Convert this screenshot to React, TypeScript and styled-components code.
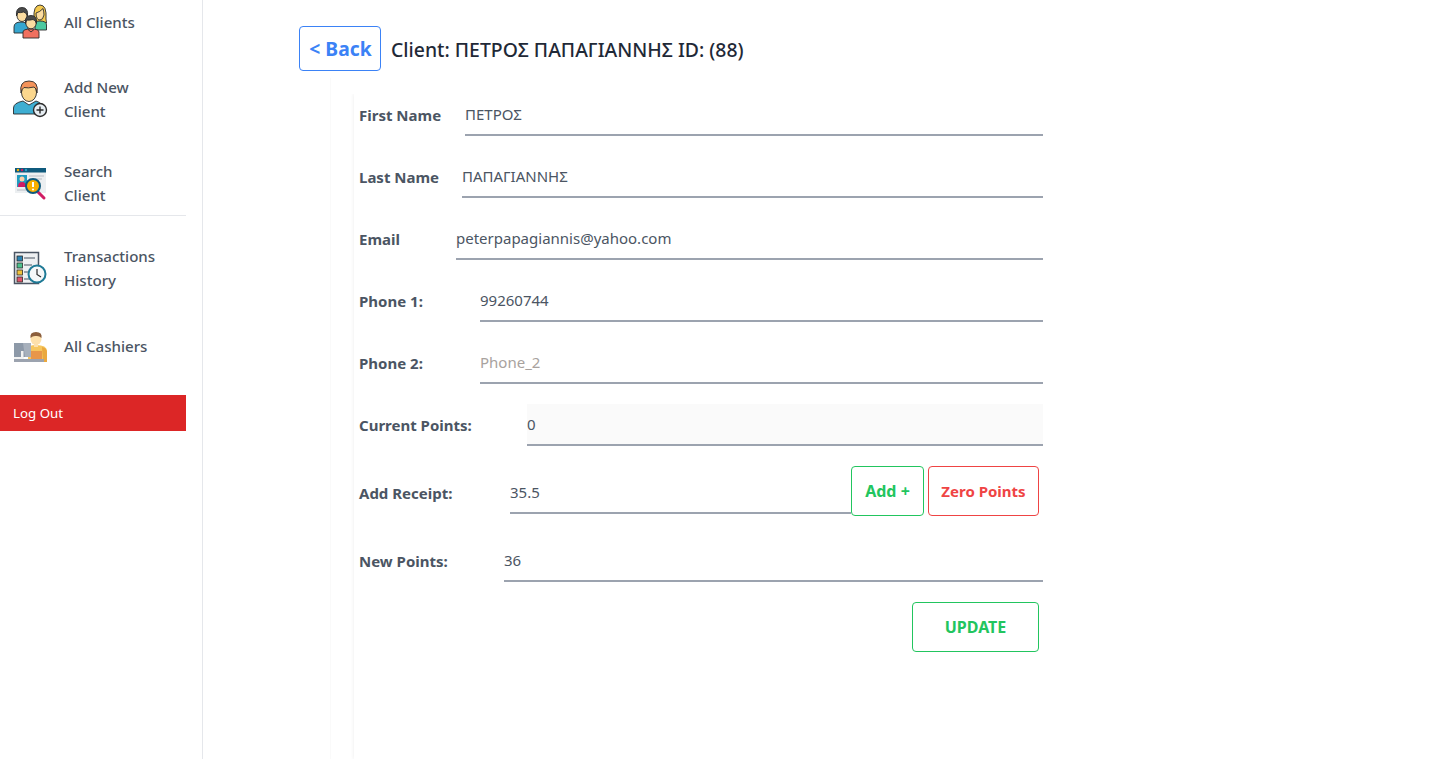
import styled, { createGlobalStyle } from "styled-components";

const GlobalStyle = createGlobalStyle`
  html, body {
    margin: 0;
    padding: 0;
    height: 100%;
    background: #ffffff;
    overflow: hidden;
    font-family: "Noto Sans", "Open Sans", sans-serif;
  }
  * { box-sizing: border-box; }
`;

const Page = styled.div`
  display: flex;
  height: 100vh;
`;

const Sidebar = styled.aside`
  width: 203px;
  flex-shrink: 0;
  border-right: 1px solid #e5e7eb;
  padding-top: 1px;
`;

const Nav = styled.nav`
  width: 186px;
  display: flex;
  flex-direction: column;
`;

const NavItem = styled.a<{ $top?: number }>`
  display: flex;
  align-items: center;
  margin-top: ${({ $top }) => $top ?? 0}px;
  padding-left: 8px;
  gap: 12px;
  color: #4b5563;
  font-size: 15.1px;
  font-weight: 500;
  line-height: 24px;
  svg { flex-shrink: 0; }
`;

const Divider = styled.hr`
  margin: 8px 0 0;
  border: 0;
  border-top: 1px solid #e5e7eb;
`;

const LogOut = styled.button`
  margin-top: 28px;
  height: 36px;
  padding: 0 0 0 13px;
  border: 0;
  background: #dc2626;
  color: #ffffff;
  font: 400 13.3px "Noto Sans", sans-serif;
  text-align: left;
`;

const Main = styled.main`
  flex: 1;
  display: flex;
  flex-direction: column;
  padding: 26px 0 0 96px;
`;

const Header = styled.header`
  display: flex;
  align-items: center;
  gap: 10px;
`;

const BackButton = styled.button`
  width: 82px;
  height: 45px;
  padding: 0 0 0 1px;
  background: #ffffff;
  border: 1px solid #3b82f6;
  border-radius: 4px;
  color: #3b82f6;
  font: 700 19.3px "Noto Sans", sans-serif;
`;

const Title = styled.h1`
  margin: 2px 0 0;
  color: #1f2937;
  font-size: 19.4px;
  font-weight: 500;
`;

const Panel = styled.section`
  flex: 1;
  margin: 7px 0 0 31px;
  padding: 16px 0 0 23px;
  display: flex;
  border-left: 1px solid #fafafa;
`;

const Form = styled.form`
  width: 689px;
  padding-left: 5px;
  box-shadow: -1px 0 3px rgba(0, 0, 0, 0.05);
  clip-path: inset(0 0 0 -6px);
`;

const Row = styled.div<{ $nudge?: number; $after?: number }>`
  display: flex;
  align-items: center;
  margin-bottom: ${({ $after }) => $after ?? 20}px;

  label, input {
    margin-top: ${({ $nudge }) => $nudge ?? 0}px;
  }
`;

const Label = styled.label<{ $width: number }>`
  width: ${({ $width }) => $width}px;
  flex-shrink: 0;
  color: #4b5563;
  font-size: 15px;
  font-weight: 700;
`;

const Input = styled.input<{ $readOnlyBg?: boolean }>`
  flex: 1;
  min-width: 0;
  height: 42px;
  padding: 0;
  border: 0;
  border-bottom: 2px solid #9ca3af;
  outline: none;
  background: ${({ $readOnlyBg }) => ($readOnlyBg ? "#fafafa" : "transparent")};
  color: #4b5563;
  font: 400 15px "Noto Sans", sans-serif;

  &::placeholder {
    color: #a8a29e;
    opacity: 1;
  }
`;

const OutlineButton = styled.button<{ $color: string; $width: number; $left?: number; $size?: number }>`
  width: ${({ $width }) => $width}px;
  height: 50px;
  flex-shrink: 0;
  margin-left: ${({ $left }) => $left ?? 0}px;
  padding: 0;
  background: #ffffff;
  border: 1px solid ${({ $color }) => $color};
  border-radius: 4px;
  color: ${({ $color }) => $color};
  font: 700 ${({ $size }) => $size ?? 15}px "Noto Sans", sans-serif;
`;

const Spacer = styled.span`
  width: 4px;
  flex-shrink: 0;
`;

const Actions = styled.div`
  display: flex;
  justify-content: flex-end;
  padding-right: 4px;
`;

const AllClientsIcon = () => (
  <svg width="44" height="42" viewBox="0 0 44 42">
    <g transform="translate(0 -1)" stroke="#2b2b2b" strokeWidth="0.9">
      <path d="M26 19 Q25 5 32 5 Q39 5 38 19 L38.500 23 L26 23 Z" fill="#f4c94f" />
      <path d="M27 30 V24 Q27 21 32 21 Q38.500 21 38.500 25 V30 Z" fill="#4cc9a0" />
      <path d="M28 13 Q32 12 35 8.500 Q36 12 36 15 Q35 20 32 20 Q28 20 28 13 Z" fill="#fbdca0" />
      <path d="M6 33 V27 Q6 22 13 22 Q20 22 20 27 V33 Z" fill="#36a6cf" />
      <ellipse cx="14" cy="15.500" rx="5" ry="6" fill="#fbdca0" />
      <path d="M8.500 16 Q7.500 7.500 14 7.500 Q20.500 7.500 19.500 16 Q18.500 12.500 15.500 12 Q12 13 10 12.500 Q9 13.500 8.500 16 Z" fill="#4a4a4a" />
      <path d="M15 38 V32 Q15 29 23 29 Q31 29 31 32 V38 Z" fill="#f0705f" />
      <path d="M20 29.500 L23 32 L26 29.500" fill="none" />
      <ellipse cx="23" cy="23" rx="5.200" ry="5.800" fill="#fbdca0" />
      <path d="M17.500 23.500 Q16.500 15.500 23 15.500 Q29.500 15.500 28.500 23.500 Q27.500 20 25 19.500 Q21 20.500 19 20 Q18 21 17.500 23.500 Z" fill="#4a4a4a" />
    </g>
  </svg>
);

const AddClientIcon = () => (
  <svg width="44" height="42" viewBox="0 0 44 42">
    <path d="M5.500 36 V30 Q5.500 25 15 23 L21 27 L28 23 Q32 24 34 27 V36 Z" fill="#3eaed2" stroke="#2b2b2b" strokeWidth="0.900" />
    <ellipse cx="21" cy="14.500" rx="7.500" ry="9" fill="#fbd78e" stroke="#2b2b2b" strokeWidth="0.900" />
    <path d="M13 15 Q11 3 21 3 Q31 3 29 15 Q28.500 10 26 9 Q20 10.500 16 9.500 Q13.500 11 13 15 Z" fill="#f4935a" stroke="#2b2b2b" strokeWidth="0.900" />
    <circle cx="32" cy="32" r="6.500" fill="#e6edf2" stroke="#2b2b2b" strokeWidth="1.400" />
    <path d="M28.500 32 H35.500 M32 28.500 V35.500" stroke="#2b2b2b" strokeWidth="1.400" />
  </svg>
);

const SearchClientIcon = () => (
  <svg width="44" height="42" viewBox="0 0 44 42">
    <rect x="7" y="6" width="31" height="25" fill="#eceff1" />
    <rect x="7" y="6" width="31" height="4.500" fill="#0f5a7d" />
    <circle cx="10" cy="8" r="1.200" fill="#fbb000" />
    <circle cx="14" cy="8" r="1.200" fill="#d01c63" />
    <circle cx="18" cy="8" r="1.200" fill="#2b9fc4" />
    <rect x="9" y="13" width="10" height="12" fill="#1f9cc0" />
    <circle cx="14" cy="17" r="2.500" fill="#fbd0a8" />
    <path d="M10 25 Q10 20 14 20 Q18 20 18 25 Z" fill="#d01c63" />
    <path d="M21 14 H36 M21 17 H34 M9 28 H20" stroke="#c9ced3" strokeWidth="1.500" />
    <path d="M30 30 L36 36" stroke="#d01c63" strokeWidth="3" strokeLinecap="round" />
    <circle cx="25" cy="24" r="7" fill="#fbb000" stroke="#0f5a7d" strokeWidth="2" />
    <path d="M25 20 V25" stroke="#ffffff" strokeWidth="2" />
    <circle cx="25" cy="27.500" r="1.100" fill="#ffffff" />
  </svg>
);

const TransactionsIcon = () => (
  <svg width="44" height="42" viewBox="0 0 44 42">
    <rect x="6.500" y="5.500" width="24" height="31" fill="#eef0f2" stroke="#4b5563" strokeWidth="1.500" />
    <rect x="9" y="9" width="5.500" height="5" fill="#2b84b4" stroke="#2b2b2b" strokeWidth="0.800" />
    <rect x="9" y="16" width="5.500" height="5" fill="#4cc08c" stroke="#2b2b2b" strokeWidth="0.800" />
    <rect x="9" y="23" width="5.500" height="5" fill="#f0c23c" stroke="#2b2b2b" strokeWidth="0.800" />
    <rect x="9" y="30" width="5.500" height="5" fill="#e0556a" stroke="#2b2b2b" strokeWidth="0.800" />
    <path d="M16 11 H27 M16 18 H24 M16 25 H21 M16 32 H23" stroke="#4b5563" strokeWidth="1" />
    <circle cx="29" cy="27" r="8.500" fill="#f6f8f9" stroke="#1f7a96" strokeWidth="2" />
    <path d="M29 22 V27.500 L33 30" fill="none" stroke="#2b2b2b" strokeWidth="1.200" />
  </svg>
);

const CashierIcon = () => (
  <svg width="44" height="42" viewBox="0 0 44 42">
    <path d="M20 37 V24 Q20 20 28 20 Q39 20 39 26 V37 Z" fill="#f6c65e" />
    <path d="M34 22 Q39 23 39 27 V37 H35 Z" fill="#eaa83e" />
    <path d="M23 26 H34 V34 H23 Z" fill="#e8964a" />
    <ellipse cx="28" cy="14" rx="5.500" ry="6" fill="#fde0ab" />
    <rect x="26" y="17" width="4" height="5" fill="#fde0ab" />
    <path d="M22.500 13 Q21.500 7 28 7 Q34.500 7 33.500 13 Q31 10.500 28 11 Q25 10.500 22.500 13 Z" fill="#8b5e3c" />
    <rect x="6" y="18" width="17" height="14" fill="#8d99a8" />
    <path d="M15 18 H23 V32 H17 Z" fill="#a7b0bc" />
    <rect x="13" y="26" width="2.500" height="8" fill="#f2f2f2" />
    <rect x="6" y="32" width="10" height="2" fill="#f2f2f2" />
    <rect x="6" y="34" width="30" height="3" fill="#9ca3af" />
  </svg>
);

const fields = [
  { label: "First Name", width: 106, value: "ΠΕΤΡΟΣ" },
  { label: "Last Name", width: 103, value: "ΠΑΠΑΓΙΑΝΝΗΣ" },
  { label: "Email", width: 97, value: "peterpapagiannis@yahoo.com" },
  { label: "Phone 1:", width: 121, value: "99260744" },
  { label: "Phone 2:", width: 121, value: "", placeholder: "Phone_2" },
];

export default function App() {
  return (
    <>
      <GlobalStyle />
      <Page>
        <Sidebar>
          <Nav>
            <NavItem>
              <AllClientsIcon />
              <span>All Clients</span>
            </NavItem>
            <NavItem $top={32}>
              <AddClientIcon />
              <span>Add New<br />Client</span>
            </NavItem>
            <NavItem $top={36}>
              <SearchClientIcon />
              <span>Search<br />Client</span>
            </NavItem>
            <Divider />
            <NavItem $top={28}>
              <TransactionsIcon />
              <span>Transactions<br />History</span>
            </NavItem>
            <NavItem $top={33}>
              <CashierIcon />
              <span>All Cashiers</span>
            </NavItem>
            <LogOut>Log Out</LogOut>
          </Nav>
        </Sidebar>
        <Main>
          <Header>
            <BackButton>&lt; Back</BackButton>
            <Title>Client: ΠΕΤΡΟΣ ΠΑΠΑΓΙΑΝΝΗΣ ID: (88)</Title>
          </Header>
          <Panel>
            <Form>
              {fields.map((field) => (
                <Row key={field.label}>
                  <Label $width={field.width}>{field.label}</Label>
                  <Input defaultValue={field.value} placeholder={field.placeholder} />
                </Row>
              ))}
              <Row>
                <Label $width={168}>Current Points:</Label>
                <Input $readOnlyBg defaultValue="0" readOnly />
              </Row>
              <Row $nudge={4} $after={24}>
                <Label $width={151}>Add Receipt:</Label>
                <Input defaultValue="35.5" />
                <OutlineButton type="button" $color="#22c55e" $width={73} $size={16}>Add +</OutlineButton>
                <OutlineButton type="button" $color="#ef4444" $width={111} $left={4}>Zero Points</OutlineButton>
                <Spacer />
              </Row>
              <Row>
                <Label $width={145}>New Points:</Label>
                <Input defaultValue="36" />
              </Row>
              <Actions>
                <OutlineButton type="button" $color="#22c55e" $width={127} $size={16}>UPDATE</OutlineButton>
              </Actions>
            </Form>
          </Panel>
        </Main>
      </Page>
    </>
  );
}
